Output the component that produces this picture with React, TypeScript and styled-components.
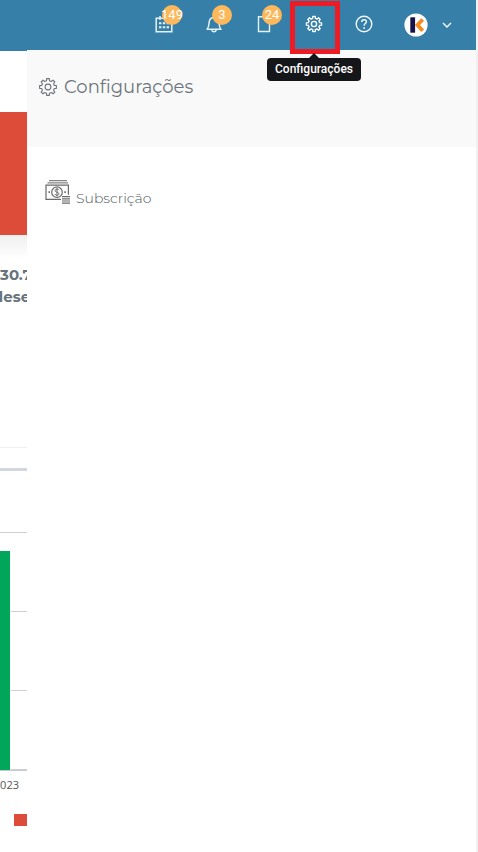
import React from "react";
import styled, { createGlobalStyle, css } from "styled-components";

const GlobalStyle = createGlobalStyle`
  *, *::before, *::after { box-sizing: border-box; }
  html, body, #root { height: 100%; }
  body {
    margin: 0;
    background: #fff;
    color: #6c757d;
    font-family: Montserrat, Inter, sans-serif;
    overflow: hidden;
  }
  button { font: inherit; color: inherit; background: none; border: 0; padding: 0; cursor: pointer; }
`;

const Page = styled.div`
  min-height: 100vh;
  display: flex;
  flex-direction: column;
  border-right: 2px solid #f1f1f1;
`;

const TopBar = styled.header`
  height: 50px;
  flex: none;
  display: flex;
  justify-content: flex-end;
  background: #367fa9;
  color: #fff;
`;

const BarButton = styled.button<{ $marked?: boolean }>`
  position: relative;
  width: 50px;
  height: 48px;
  display: flex;
  align-items: center;
  justify-content: center;
  ${({ $marked }) =>
    $marked &&
    css`
      &::before {
        content: "";
        position: absolute;
        z-index: 2;
        inset: 1px -1px -6px 1px;
        border: 5px solid #ed1c24;
      }
    `}
`;

const Badge = styled.span`
  position: absolute;
  top: 5px;
  left: 23px;
  width: 20px;
  height: 20px;
  border-radius: 50%;
  display: flex;
  align-items: center;
  justify-content: center;
  background: #fdb85b;
  color: #fff;
  font: 13px/20px Roboto, sans-serif;
`;

const Tooltip = styled.span`
  position: absolute;
  z-index: 3;
  top: 58px;
  left: 50%;
  transform: translateX(-50%);
  padding: 0 8px;
  border-radius: 4px;
  background: #15161a;
  color: #fff;
  font: 500 12px/23px Roboto, sans-serif;
  white-space: nowrap;
  &::before {
    content: "";
    position: absolute;
    bottom: 100%;
    left: 50%;
    margin-left: -5px;
    border: 5px solid transparent;
    border-top: 0;
    border-bottom-color: #15161a;
  }
`;

const Account = styled.button`
  width: 87px;
  height: 50px;
  display: flex;
  align-items: center;
  gap: 14px;
  padding-left: 15px;
`;

const Body = styled.div`
  flex: 1;
  display: grid;
  grid-template-columns: 27px 1fr;
`;

const Backdrop = styled.main`
  overflow: hidden;
  border-top: 1px solid #367fa9;
  padding-top: 61px;
`;

const Banner = styled.div`
  height: 123px;
  background: #dd4b39;
`;

const Shade = styled.div`
  height: 29px;
  background: linear-gradient(#efefef, #fff 24px);
`;

const ClippedLine = styled.div<{ $align: "flex-start" | "center" }>`
  display: flex;
  justify-content: ${({ $align }) => $align};
  padding-right: ${({ $align }) => ($align === "center" ? 4 : 0)}px;
  white-space: nowrap;
  font-size: 15px;
  font-weight: 700;
  line-height: 22px;
  color: #66737c;
`;

const Divider = styled.hr`
  margin: 139px 0 20px;
  border: 0;
  height: 1px;
  background: #f0f0f0;
`;

const PanelEdge = styled.div`
  height: 3px;
  background: #d2d6de;
`;

const Chart = styled.div`
  margin-top: 61px;
  height: 239px;
  display: flex;
  align-items: flex-end;
  border-bottom: 1px solid #c0c8da;
  background: repeating-linear-gradient(#d0d0d0 0 1px, transparent 1px 79px);
`;

const Column = styled.div`
  width: 11px;
  height: 219px;
  background: #00a65a;
  border-right: 1px solid #fff;
`;

const AxisLabel = styled.div`
  padding-right: 8px;
  display: flex;
  justify-content: flex-end;
  color: #545454;
  font: 11px/28px "Open Sans", sans-serif;
`;

const LegendKey = styled.div`
  margin: 15px 0 0 14px;
  height: 12px;
  background: #dd4b39;
`;

const Drawer = styled.aside`
  background: #fff;
`;

const DrawerHead = styled.div`
  height: 97px;
  padding: 24px 11px;
  background: #f9f9f9;
`;

const Title = styled.h1`
  margin: 0;
  display: flex;
  align-items: center;
  gap: 6px;
  font-size: 18px;
  line-height: 26px;
  font-weight: 400;
`;

const MenuLink = styled.a`
  margin: 33px 18px;
  display: flex;
  align-items: flex-start;
  gap: 6px;
  color: #50565c;
  font-size: 14px;
  font-weight: 300;
  text-decoration: none;
  line-height: 20px;
  & > span { padding-top: 8px; }
`;

const gearOutline = (() => {
  const points: string[] = [];
  for (let tooth = 0; tooth < 8; tooth++) {
    const profile = [[-13, 6.5], [-9, 8.5], [9, 8.5], [13, 6.5]];
    for (const [offset, radius] of profile) {
      const angle = ((tooth * 45 + offset) * Math.PI) / 180;
      points.push(`${(10 + radius * Math.sin(angle)).toFixed(2)} ${(10 - radius * Math.cos(angle)).toFixed(2)}`);
    }
  }
  return `M${points.join("L")}Z`;
})();

const Gear = ({ size, weight }: { size: number; weight: number }) => (
  <svg width={size} height={size} viewBox="0 0 20 20" fill="none" stroke="currentColor" strokeWidth={weight} strokeLinejoin="round" aria-hidden="true">
    <path d={gearOutline} />
    <circle cx="10" cy="10" r="2.9" />
  </svg>
);

const CalendarIcon = () => (
  <svg width="18" height="18" viewBox="0 0 18 18" fill="none" stroke="#e5f2f8" strokeWidth="1.5" aria-hidden="true">
    <path d="M1.2 3.2h15.6v13.6H1.2zM5 1v4M13 1v4" />
    <path d="M4 8.2h2.4M7.8 8.2h2.4M11.6 8.2H14M4 12.2h2.4M7.8 12.2h2.4M11.6 12.2H14" strokeWidth="2" />
  </svg>
);

const BellIcon = () => (
  <svg width="18" height="18" viewBox="0 0 18 18" fill="none" stroke="#e5f2f8" strokeWidth="1.5" strokeLinejoin="round" aria-hidden="true">
    <path d="M2 14.2C4 12.5 3.8 10 4.2 6.8 4.6 3.9 6.5 2.4 9 2.4s4.4 1.5 4.8 4.4c.4 3.2.2 5.7 2.2 7.4zM6.7 14.5c.2 1.5 1 2.3 2.3 2.3s2.1-.8 2.3-2.3" />
  </svg>
);

const FileIcon = () => (
  <svg width="18" height="18" viewBox="0 0 18 18" fill="none" stroke="#e5f2f8" strokeWidth="1.4" aria-hidden="true">
    <path d="M3.5 1.7H11l3.5 3.5v11.3h-11zM11 1.7v3.5h3.5" />
  </svg>
);

const HelpIcon = () => (
  <svg width="18" height="18" viewBox="0 0 18 18" fill="none" stroke="#f0f7fb" strokeWidth="1.4" aria-hidden="true">
    <circle cx="9" cy="9" r="7.8" />
    <path d="M6.7 7.1c0-1.5 1-2.4 2.4-2.4s2.3.9 2.3 2.1c0 1.8-2.3 1.8-2.3 4" />
    <circle cx="9.1" cy="13" r=".9" fill="#f0f7fb" stroke="none" />
  </svg>
);

const Logo = () => (
  <svg width="24" height="24" viewBox="0 0 24 24" aria-hidden="true">
    <circle cx="12" cy="12" r="11.6" fill="#fff" />
    <path d="M6.3 4.3h4.8v15.4H6.3z" fill="#15134a" />
    <path d="M18.7 6.5 13.5 12l5.2 5.8" fill="none" stroke="#f78b1f" strokeWidth="3.8" />
  </svg>
);

const Chevron = () => (
  <svg width="10" height="6" viewBox="0 0 10 6" fill="none" stroke="#fff" strokeWidth="1.4" aria-hidden="true">
    <path d="m1 1 4 4 4-4" />
  </svg>
);

const MoneyIcon = () => (
  <svg width="25" height="25" viewBox="0 0 25 25" fill="none" stroke="#6a6a6a" strokeWidth="1.2" aria-hidden="true">
    <path d="M4 .7h18M2.5 2.9h20.5" stroke="#858585" />
    <path d="M16 19.3H1V5.2h22.4v9.6" />
    <circle cx="12" cy="12.2" r="5.3" />
    <path d="M14 10.2c-.3-.8-1-1.1-2-1.1-2.6 0-2.6 2.8 0 3.1s2.5 3.1 0 3.1c-1.1 0-1.8-.4-2-1.2M12 8v8.5" strokeWidth="1" />
    <path d="M3.5 12.2H5M19.3 12.2h1.6" strokeWidth="1.7" />
    <path d="M17 16.6h8M17 18.8h8M17 21h8M17 23.2h8" />
  </svg>
);

export default function App() {
  return (
    <>
      <GlobalStyle />
      <Page>
        <TopBar>
          <BarButton aria-label="Calendário"><CalendarIcon /><Badge>149</Badge></BarButton>
          <BarButton aria-label="Notificações"><BellIcon /><Badge>3</Badge></BarButton>
          <BarButton aria-label="Documentos"><FileIcon /><Badge>24</Badge></BarButton>
          <BarButton $marked aria-describedby="settings-tip" aria-label="Configurações">
            <Gear size={18} weight={1.5} />
            <Tooltip id="settings-tip" role="tooltip">Configurações</Tooltip>
          </BarButton>
          <BarButton aria-label="Ajuda"><HelpIcon /></BarButton>
          <Account aria-label="Conta"><Logo /><Chevron /></Account>
        </TopBar>
        <Body>
          <Backdrop>
            <Banner />
            <Shade />
            <ClippedLine $align="flex-start">30.7</ClippedLine>
            <ClippedLine $align="center">dese</ClippedLine>
            <Divider />
            <PanelEdge />
            <Chart><Column /></Chart>
            <AxisLabel>2023</AxisLabel>
            <LegendKey />
          </Backdrop>
          <Drawer>
            <DrawerHead>
              <Title><Gear size={20} weight={1.1} /> Configurações</Title>
            </DrawerHead>
            <MenuLink href="#subscricao"><MoneyIcon /><span>Subscrição</span></MenuLink>
          </Drawer>
        </Body>
      </Page>
    </>
  );
}
